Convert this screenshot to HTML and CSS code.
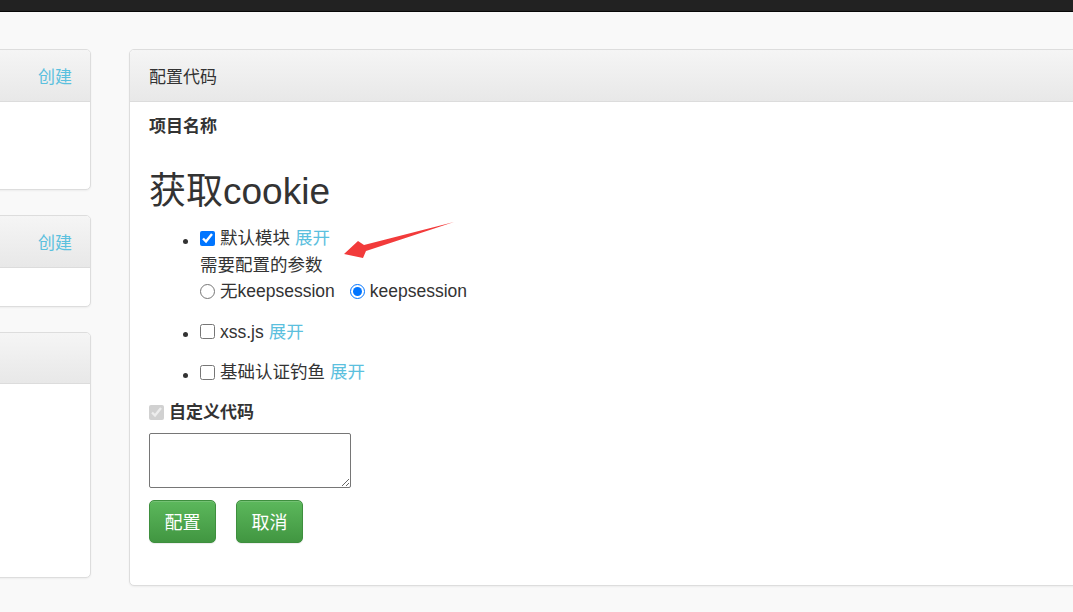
FILE: index.html
```html
<!DOCTYPE html>
<html lang="zh">
<head>
<meta charset="utf-8">
<title>配置代码</title>
<link rel="stylesheet" href="styles.css">
</head>
<body>
<div class="navbar"></div>
<div class="main">
  <div class="side">
    <div class="panel p1">
      <div class="panel-heading side-heading"><a class="link">创建</a></div>
      <div class="panel-body"></div>
    </div>
    <div class="panel p2">
      <div class="panel-heading side-heading"><a class="link">创建</a></div>
      <div class="panel-body"></div>
    </div>
    <div class="panel p3">
      <div class="panel-heading side-heading"></div>
      <div class="panel-body"></div>
    </div>
  </div>
  <div class="panel config">
    <div class="panel-heading">配置代码</div>
    <div class="panel-body config-body">
      <div class="label-bold">项目名称</div>
      <h1 class="title">获取cookie</h1>
      <ul class="modules">
        <li>
          <div class="row"><input type="checkbox" class="chk" checked><span>默认模块</span> <a class="link">展开</a></div>
          <div class="row">需要配置的参数</div>
          <div class="row">
            <label class="radio-label"><input type="radio" name="ks" class="rad">无keepsession</label>
            <label class="radio-label"><input type="radio" name="ks" class="rad" checked>keepsession</label>
          </div>
        </li>
        <li>
          <div class="row"><input type="checkbox" class="chk"><span>xss.js</span> <a class="link">展开</a></div>
        </li>
        <li>
          <div class="row"><input type="checkbox" class="chk"><span>基础认证钓鱼</span> <a class="link">展开</a></div>
        </li>
      </ul>
      <div class="row custom"><input type="checkbox" class="chk" checked disabled><span class="label-bold">自定义代码</span></div>
      <textarea class="code"></textarea>
      <div class="actions">
        <button class="btn">配置</button>
        <button class="btn">取消</button>
      </div>
    </div>
    <svg class="arrow" width="120" height="50" viewBox="0 0 120 50">
      <polygon points="8,38 22,25 28,29 118,6 30,35 27,42" fill="#f23b3b"/>
    </svg>
  </div>
</div>
</body>
</html>
```
FILE: styles.css
```css
html, body {
  margin: 0;
  padding: 0;
}
body {
  background: #f9f9f9;
  font-family: "Liberation Sans", "Noto Sans CJK SC", sans-serif;
  font-size: 17.5px;
  color: #333;
  overflow: hidden;
  width: 1073px;
  height: 612px;
}
.navbar {
  height: 12px;
  background: #222;
  border-bottom: 1px solid #080808;
  box-sizing: border-box;
}
.main {
  display: flex;
  align-items: flex-start;
  padding-top: 37px;
}
.side {
  width: 200px;
  margin-left: -109px;
  flex: none;
  display: flex;
  flex-direction: column;
  gap: 25px;
}
.panel {
  background: #fff;
  border: 1px solid #ddd;
  border-radius: 5px;
  box-shadow: 0 1px 2px rgba(0,0,0,.05);
  box-sizing: border-box;
  overflow: hidden;
}
.panel-heading {
  height: 51px;
  background: linear-gradient(#f5f5f5, #e8e8e8);
  border-bottom: 1px solid #dcdcdc;
  display: flex;
  align-items: center;
  padding: 0 19px;
  font-size: 17px;
  color: #333;
}
.side-heading {
  justify-content: flex-end;
  padding-right: 18px;
}
.link {
  color: #5bc0de;
  text-decoration: none;
}
.p1 .panel-body { height: 87px; }
.p2 .panel-body { height: 38px; }
.p3 .panel-body { height: 193px; }
.p3 .panel-heading { height: 50px; }

.config {
  margin-left: 38px;
  width: 1000px;
  flex: none;
  position: relative;
}
.config-body {
  padding: 12px 19px 42px;
  height: 483px;
  box-sizing: border-box;
}
.label-bold {
  font-weight: bold;
  font-size: 17px;
  line-height: 25px;
}
.title {
  font-size: 37px;
  font-weight: normal;
  line-height: 40px;
  margin: 33px 0 13px;
}
.modules {
  margin: 0;
  padding-left: 51px;
  list-style: disc;
}
.modules li {
  margin-bottom: 14px;
}
.row {
  line-height: 26.5px;
  display: flex;
  align-items: center;
  white-space: nowrap;
}
.row .link {
  margin-left: 5px;
}
.chk, .rad {
  width: 15px;
  height: 15px;
  margin: 0 5px 0 0;
}
.radio-label {
  display: inline-flex;
  align-items: center;
  margin-right: 15px;
}
.custom {
  margin-top: 0;
}
.code {
  display: block;
  width: 202px;
  height: 55px;
  box-sizing: border-box;
  margin: 8px 0 12px;
  border: 1px solid #767676;
  border-radius: 2px;
  resize: vertical;
}
.actions {
  display: flex;
  gap: 20px;
}
.btn {
  width: 67px;
  height: 43px;
  border: 1px solid #3e8f3e;
  border-radius: 5px;
  background: linear-gradient(#5cb85c, #419641);
  color: #fff;
  font-family: "Noto Sans CJK SC", sans-serif;
  font-size: 18px;
  padding: 0;
  box-shadow: inset 0 1px 0 rgba(255,255,255,.15), 0 1px 1px rgba(0,0,0,.075);
}
.arrow {
  position: absolute;
  left: 206px;
  top: 166px;
}
```
